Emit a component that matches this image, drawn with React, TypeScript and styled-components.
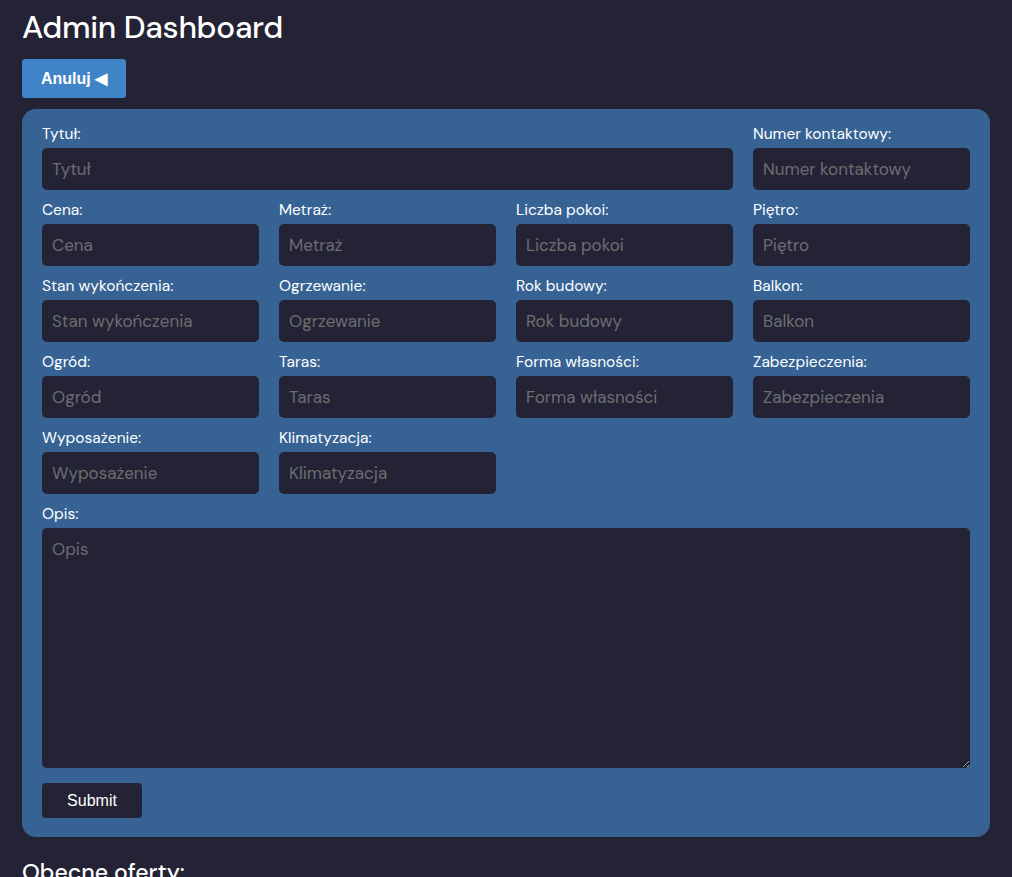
import styled, { createGlobalStyle } from "styled-components";

const GlobalStyle = createGlobalStyle`
  html, body {
    margin: 0;
    background-color: #232335;
    font-family: "DM Sans", Inter, "Noto Sans", sans-serif;
    color: white;
  }
`;

const Page = styled.div`
  padding: 8px 22px 0 22px;
  box-sizing: border-box;
  overflow: hidden;
  height: 877px;
`;

const Title = styled.h1`
  font-size: 31.5px;
  font-weight: 500;
  margin: 0 0 11px 0;
  line-height: 40px;
  letter-spacing: -0.3px;
`;

const CancelButton = styled.button`
  background-color: #3f84c7;
  color: white;
  border: none;
  border-radius: 3px;
  font-family: "Liberation Sans", Arial, sans-serif;
  font-weight: bold;
  font-size: 16px;
  height: 39px;
  padding: 0 19px;
  display: block;
  margin-bottom: 11px;
`;

const Panel = styled.form`
  background-color: #366394;
  border-radius: 14px;
  padding: 15px 20px 19px 20px;
`;

const Grid = styled.div`
  display: grid;
  grid-template-columns: repeat(4, minmax(0, 1fr));
  column-gap: 20px;
  row-gap: 10px;
`;

const Field = styled.div<{ $span?: number }>`
  display: flex;
  flex-direction: column;
  min-width: 0;
  grid-column: span ${(p) => p.$span ?? 1};
`;

const Label = styled.label`
  font-size: 15.5px;
  line-height: 20px;
  margin-bottom: 4px;
`;

const Input = styled.input`
  width: 100%;
  min-width: 0;
  height: 42px;
  box-sizing: border-box;
  background-color: #232335;
  border: none;
  border-radius: 5px;
  padding: 0 10px;
  font-family: inherit;
  font-size: 17px;
  color: white;
  &::placeholder {
    color: #6d6d70;
  }
`;

const TextArea = styled.textarea`
  width: 100%;
  height: 240px;
  box-sizing: border-box;
  background-color: #232335;
  border: none;
  border-radius: 5px;
  padding: 10px;
  font-family: inherit;
  font-size: 17px;
  color: white;
  resize: vertical;
  &::placeholder {
    color: #6d6d70;
  }
`;

const SubmitButton = styled.button`
  margin-top: 15px;
  width: 100px;
  height: 35px;
  background-color: #232335;
  color: white;
  border: none;
  border-radius: 4px;
  font-family: "Liberation Sans", Arial, sans-serif;
  font-size: 16px;
`;

const SubTitle = styled.h2`
  font-size: 23px;
  font-weight: 500;
  margin: 20px 0 0 0;
`;

const fields: { label: string; span?: number }[] = [
  { label: "Tytuł", span: 3 },
  { label: "Numer kontaktowy" },
  { label: "Cena" },
  { label: "Metraż" },
  { label: "Liczba pokoi" },
  { label: "Piętro" },
  { label: "Stan wykończenia" },
  { label: "Ogrzewanie" },
  { label: "Rok budowy" },
  { label: "Balkon" },
  { label: "Ogród" },
  { label: "Taras" },
  { label: "Forma własności" },
  { label: "Zabezpieczenia" },
  { label: "Wyposażenie" },
  { label: "Klimatyzacja" },
];

function App() {
  return (
    <Page>
      <GlobalStyle />
      <Title>Admin Dashboard</Title>
      <CancelButton>Anuluj ◀</CancelButton>
      <Panel onSubmit={(e) => e.preventDefault()}>
        <Grid>
          {fields.map((f) => (
            <Field key={f.label} $span={f.span}>
              <Label>{f.label}:</Label>
              <Input placeholder={f.label} />
            </Field>
          ))}
          <Field $span={4}>
            <Label>Opis:</Label>
            <TextArea placeholder="Opis" />
          </Field>
        </Grid>
        <SubmitButton type="submit">Submit</SubmitButton>
      </Panel>
      <SubTitle>Obecne oferty:</SubTitle>
    </Page>
  );
}

export default App;
